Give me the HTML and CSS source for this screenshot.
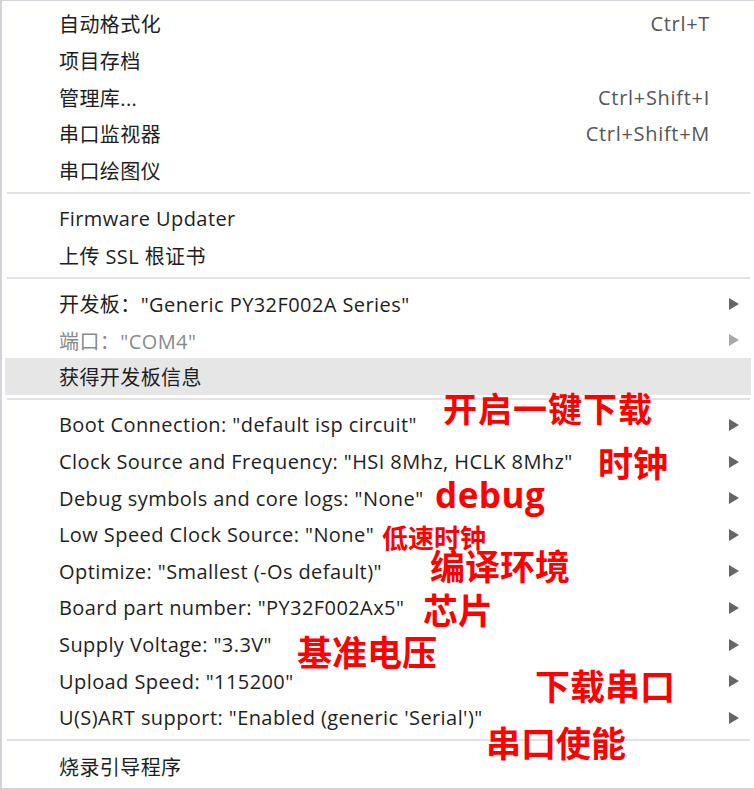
FILE: index.html
```html
<!DOCTYPE html>
<html lang="zh-CN">
<head>
<meta charset="utf-8">
<title>Menu</title>
<link rel="stylesheet" href="styles.css">
</head>
<body>
<div class="menu">
  <div class="group">
    <div class="item"><span class="label">自动格式化</span><span class="shortcut">Ctrl+T</span><span class="arrow"></span></div>
    <div class="item"><span class="label">项目存档</span><span class="arrow"></span></div>
    <div class="item"><span class="label">管理库...</span><span class="shortcut">Ctrl+Shift+I</span><span class="arrow"></span></div>
    <div class="item"><span class="label">串口监视器</span><span class="shortcut">Ctrl+Shift+M</span><span class="arrow"></span></div>
    <div class="item"><span class="label">串口绘图仪</span><span class="arrow"></span></div>
  </div>
  <div class="sep"></div>
  <div class="group">
    <div class="item"><span class="label">Firmware Updater</span><span class="arrow"></span></div>
    <div class="item"><span class="label">上传 SSL 根证书</span><span class="arrow"></span></div>
  </div>
  <div class="sep"></div>
  <div class="group">
    <div class="item"><span class="label">开发板："Generic PY32F002A Series"</span><span class="arrow"><svg viewBox="0 0 10 12" width="10" height="12"><polygon points="0,0 10,6 0,12"/></svg></span></div>
    <div class="item disabled"><span class="label">端口："COM4"</span><span class="arrow"><svg viewBox="0 0 10 12" width="10" height="12"><polygon points="0,0 10,6 0,12"/></svg></span></div>
    <div class="item active"><span class="label">获得开发板信息</span><span class="arrow"></span></div>
  </div>
  <div class="sep"></div>
  <div class="group">
    <div class="item"><span class="label">Boot Connection: "default isp circuit"</span><span class="arrow"><svg viewBox="0 0 10 12" width="10" height="12"><polygon points="0,0 10,6 0,12"/></svg></span></div>
    <div class="item"><span class="label">Clock Source and Frequency: "HSI 8Mhz, HCLK 8Mhz"</span><span class="arrow"><svg viewBox="0 0 10 12" width="10" height="12"><polygon points="0,0 10,6 0,12"/></svg></span></div>
    <div class="item"><span class="label">Debug symbols and core logs: "None"</span><span class="arrow"><svg viewBox="0 0 10 12" width="10" height="12"><polygon points="0,0 10,6 0,12"/></svg></span></div>
    <div class="item"><span class="label">Low Speed Clock Source: "None"</span><span class="arrow"><svg viewBox="0 0 10 12" width="10" height="12"><polygon points="0,0 10,6 0,12"/></svg></span></div>
    <div class="item"><span class="label">Optimize: "Smallest (-Os default)"</span><span class="arrow"><svg viewBox="0 0 10 12" width="10" height="12"><polygon points="0,0 10,6 0,12"/></svg></span></div>
    <div class="item"><span class="label">Board part number: "PY32F002Ax5"</span><span class="arrow"><svg viewBox="0 0 10 12" width="10" height="12"><polygon points="0,0 10,6 0,12"/></svg></span></div>
    <div class="item"><span class="label">Supply Voltage: "3.3V"</span><span class="arrow"><svg viewBox="0 0 10 12" width="10" height="12"><polygon points="0,0 10,6 0,12"/></svg></span></div>
    <div class="item"><span class="label">Upload Speed: "115200"</span><span class="arrow"><svg viewBox="0 0 10 12" width="10" height="12"><polygon points="0,0 10,6 0,12"/></svg></span></div>
    <div class="item"><span class="label">U(S)ART support: "Enabled (generic 'Serial')"</span><span class="arrow"><svg viewBox="0 0 10 12" width="10" height="12"><polygon points="0,0 10,6 0,12"/></svg></span></div>
  </div>
  <div class="sep"></div>
  <div class="group">
    <div class="item"><span class="label">烧录引导程序</span><span class="arrow"></span></div>
  </div>

  <span class="note n-oneclick">开启一键下载</span>
  <span class="note n-clock">时钟</span>
  <span class="note n-debug">debug</span>
  <span class="note n-lsclock">低速时钟</span>
  <span class="note n-env">编译环境</span>
  <span class="note n-chip">芯片</span>
  <span class="note n-volt">基准电压</span>
  <span class="note n-dlport">下载串口</span>
  <span class="note n-uart">串口使能</span>
</div>
</body>
</html>
```

FILE: styles.css
```css
* { box-sizing: border-box; }

html, body {
  margin: 0;
  padding: 0;
  background: #ffffff;
}

.menu {
  position: relative;
  width: 754px;
  height: 789px;
  background: #ffffff;
  border-left: 2px solid #d3d3da;
  border-top: 1px solid #d3d3da;
  border-bottom: 1px solid #d3d3da;
  padding: 4.7px 3px 3.5px 3px;
  font-family: "Open Sans", "Noto Sans CJK SC", sans-serif;
  font-size: 20px;
  color: #1e1e1e;
  overflow: hidden;
}

.group {
  display: flex;
  flex-direction: column;
}

.item {
  display: flex;
  align-items: center;
  height: 36.6px;
  padding-left: 54px;
  padding-right: 12px;
  white-space: nowrap;
  letter-spacing: 0.42px;
}

.item.active {
  background: #e6e6e6;
}

.item.disabled {
  color: #8a8a8a;
}

.label {
  flex: 1;
}

.shortcut {
  color: #565656;
  letter-spacing: 0.7px;
}

.arrow {
  width: 29px;
  display: flex;
  justify-content: flex-end;
  align-items: center;
}

.arrow svg {
  display: block;
  fill: #666666;
}

.item.disabled .arrow svg {
  fill: #a8a8a8;
}

.sep {
  height: 2px;
  margin: 3.3px 1px 6.4px 2px;
  background: #e2e2e6;
}

.note {
  position: absolute;
  color: #ff0000;
  font-family: "Noto Sans CJK SC", sans-serif;
  font-weight: 700;
  font-size: 35px;
  line-height: 1;
  white-space: nowrap;
}

.n-oneclick { left: 441px; top: 390px; font-size: 34px; letter-spacing: 1px; }
.n-clock    { left: 596px; top: 443px; }
.n-debug    { left: 433px; top: 476px; font-family: "Open Sans", sans-serif; letter-spacing: 0.5px; }
.n-lsclock  { left: 380px; top: 523px; font-size: 26px; }
.n-env      { left: 428px; top: 546px; }
.n-chip     { left: 421px; top: 590px; }
.n-volt     { left: 295px; top: 632px; }
.n-dlport   { left: 533px; top: 666px; }
.n-uart     { left: 484px; top: 723px; }
```
